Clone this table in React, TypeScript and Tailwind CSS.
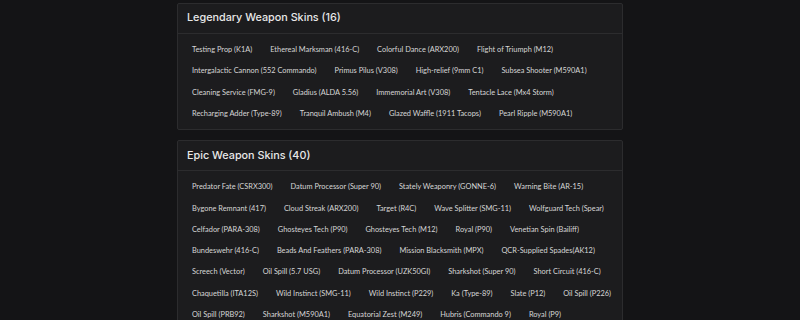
import React from "react";

const legendary = [
  ["Testing Prop (K1A)", "Ethereal Marksman (416-C)", "Colorful Dance (ARX200)", "Flight of Triumph (M12)"],
  ["Intergalactic Cannon (552 Commando)", "Primus Pilus (V308)", "High-relief (9mm C1)", "Subsea Shooter (M590A1)"],
  ["Cleaning Service (FMG-9)", "Gladius (ALDA 5.56)", "Immemorial Art (V308)", "Tentacle Lace (Mx4 Storm)"],
  ["Recharging Adder (Type-89)", "Tranquil Ambush (M4)", "Glazed Waffle (1911 Tacops)", "Pearl Ripple (M590A1)"],
];

const epic = [
  ["Predator Fate (CSRX300)", "Datum Processor (Super 90)", "Stately Weaponry (GONNE-6)", "Warning Bite (AR-15)"],
  ["Bygone Remnant (417)", "Cloud Streak (ARX200)", "Target (R4C)", "Wave Splitter (SMG-11)", "Wolfguard Tech (Spear)"],
  ["Celfador (PARA-308)", "Ghosteyes Tech (P90)", "Ghosteyes Tech (M12)", "Royal (P90)", "Venetian Spin (Bailiff)"],
  ["Bundeswehr (416-C)", "Beads And Feathers (PARA-308)", "Mission Blacksmith (MPX)", "QCR-Supplied Spades(AK12)"],
  ["Screech (Vector)", "Oil Spill (5.7 USG)", "Datum Processor (UZK50GI)", "Sharkshot (Super 90)", "Short Circuit (416-C)"],
  ["Chaquetilla (ITA12S)", "Wild Instinct (SMG-11)", "Wild Instinct (P229)", "Ka (Type-89)", "Slate (P12)", "Oil Spill (P226)"],
  ["Oil Spill (PRB92)", "Sharkshot (M590A1)", "Equatorial Zest (M249)", "Hubris (Commando 9)", "Royal (P9)"],
];

function Card({ title, rows }: { title: string; rows: string[][] }) {
  return (
    <div className="border border-[#2c2c2e] bg-[#1c1c1e] rounded-[2px]">
      <div
        className="h-[30px] flex items-center px-[9px] border-b border-[#2c2c2e] text-[10.8px] text-[#e8e8e8] font-medium"
        style={{ fontFamily: "Inter, Lato, sans-serif" }}
      >
        {title}
      </div>
      <div className="flex flex-col px-[9px] py-[5px]">
        {rows.map((row, i) => (
          <div key={i} className="flex gap-x-[8px]">
            {row.map((s) => (
              <div key={s} className="h-[21.3px] flex items-center px-[5px] text-[7.4px] text-[#d6d6d6] whitespace-nowrap">
                {s}
              </div>
            ))}
          </div>
        ))}
      </div>
    </div>
  );
}

export default function App() {
  return (
    <div className="w-[800px] h-[320px] overflow-hidden bg-[#141416]" style={{ fontFamily: "Lato, 'Noto Sans', sans-serif" }}>
      <div className="w-[446px] mx-auto pt-[3px] flex flex-col gap-[10px]">
        <Card title="Legendary Weapon Skins (16)" rows={legendary} />
        <Card title="Epic Weapon Skins (40)" rows={epic} />
      </div>
    </div>
  );
}
